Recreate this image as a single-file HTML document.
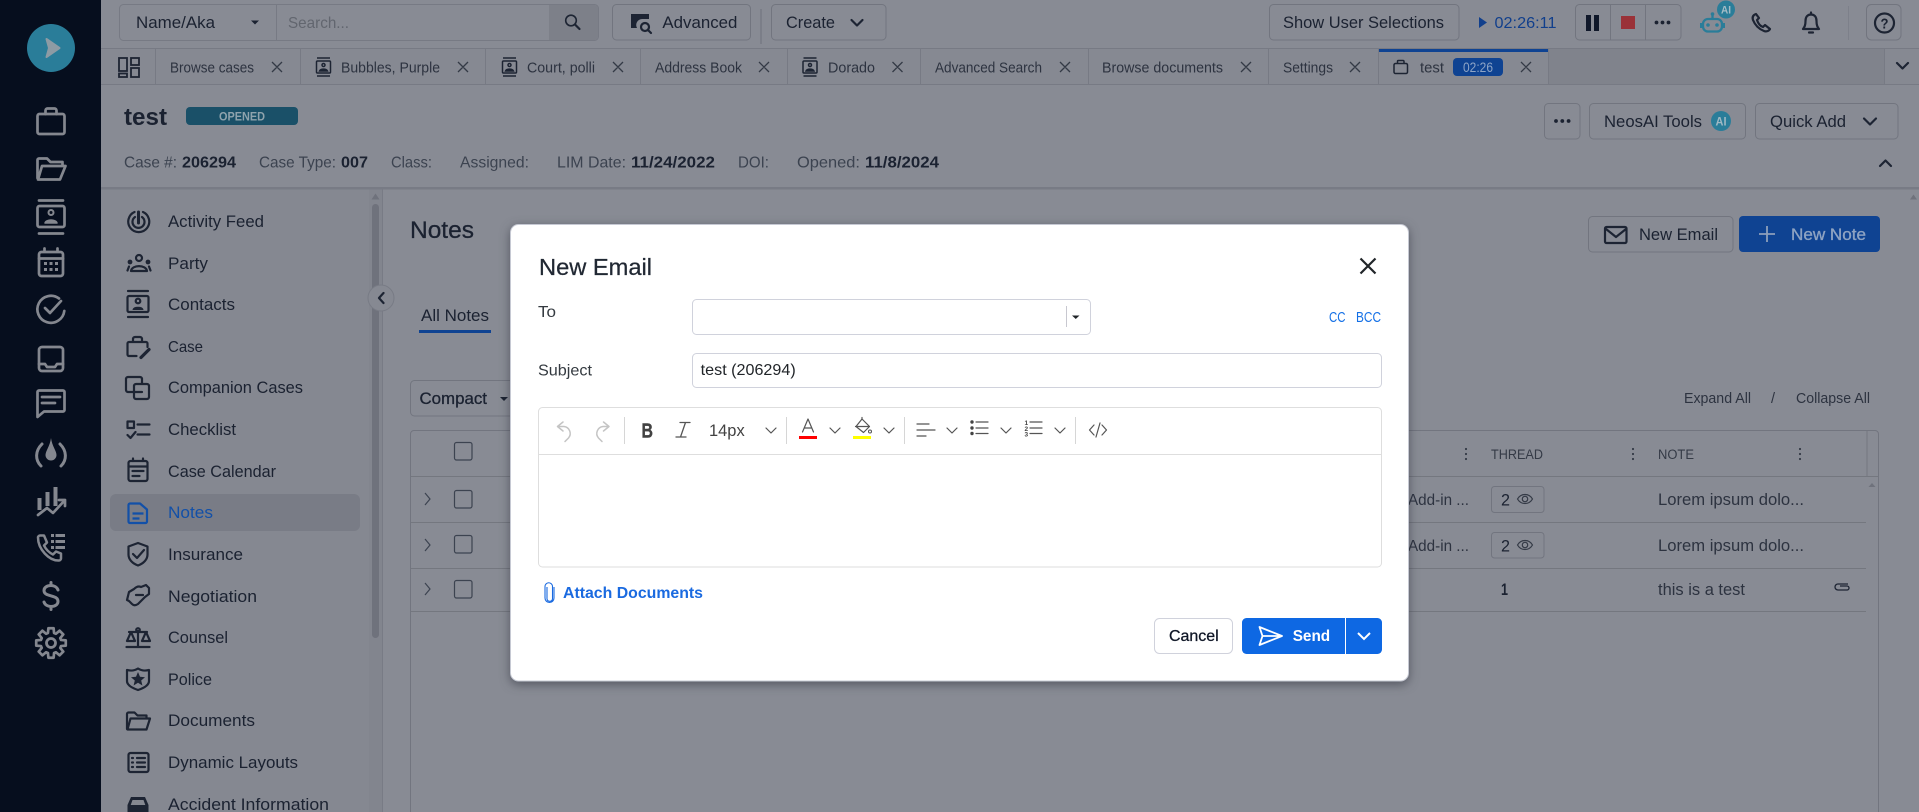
<!DOCTYPE html>
<html lang="en"><head><meta charset="utf-8"><title>Notes - New Email</title>
<style>
html,body{margin:0;padding:0;width:1919px;height:812px;overflow:hidden;background:#888b94}
svg{display:block}
text{font-family:"Liberation Sans","DejaVu Sans",sans-serif;fill:#1b2231}
.i{fill:none;stroke:#1d2433;stroke-width:2.2;stroke-linecap:round;stroke-linejoin:round}
.s{fill:none;stroke:#84878f;stroke-width:2.7;stroke-linecap:round;stroke-linejoin:round}
.b{fill:none;stroke:#72757f;stroke-width:1}
.m{font-size:17px}
.tb{font-size:14.5px;fill:#2d3340}
.h{font-size:16px;fill:#3c4350}
.hb{font-size:16px;font-weight:bold}
.u{font-size:16.500px}
.x{fill:none;stroke:#343a46;stroke-width:1.3}
.g{fill:none;stroke:#555;stroke-width:1.2;stroke-linecap:round;stroke-linejoin:round}
.md{stroke:#1b2231;stroke-width:.3px}
</style></head><body>
<svg xmlns="http://www.w3.org/2000/svg" width="1919" height="812" viewBox="0 0 1919 812">
<rect width="1919" height="812" fill="#888b94"/>

<!-- left rail -->
<rect width="101" height="812" fill="#060e1e"/>
<circle cx="51" cy="48" r="24" fill="#2a7d99"/>
<path d="M46.5 39 L59.5 48 L46.5 57 L49 48 Z" fill="#8d9ba4" stroke="#8d9ba4" stroke-width="2" stroke-linejoin="round"/>
<g class="s">
<rect x="37.5" y="114" width="27" height="20" rx="2"/><path d="M45.5 114v-3.5a2 2 0 0 1 2-2h7a2 2 0 0 1 2 2v3.5"/>
<path d="M37.5 178V160a1.5 1.5 0 0 1 1.5-1.5h8l3.5 3.5h12v3M38 179.500L42 166h23.500L60 179.500Z"/>
<path d="M39 200.500h24M39 233.500h24"/><rect x="37.500" y="206" width="27" height="21" rx="2"/><circle cx="51" cy="212.500" r="2.500" stroke-width="2"/><path d="M45 223c1-4 11-4 12 0z" fill="#84878f" stroke-width="1.500"/>
<rect x="39" y="252" width="24" height="24" rx="2.500"/><path d="M39 258.500h24M44.500 248.500v3M57.500 248.500v3"/>
<path d="M59 298.500A13.500 13.500 0 1 0 64.300 311M45 308l5 5 11-12"/>
<rect x="39" y="347" width="24" height="24" rx="3"/><path d="M39 364h6l2 3h8l2-3h6"/>
<path d="M39 390.500h24a1.500 1.500 0 0 1 1.500 1.500v18a1.500 1.500 0 0 1-1.500 1.500H44l-6.500 5.500V392a1.500 1.500 0 0 1 1.500-1.500zM42 397h18M42 403h13"/>
<path d="M42 444C35 451 35 460 41 466M60 444C67 451 67 460 61 466" stroke-width="3"/>
<path d="M38 515L47 508L53 513L65 500M59 500h6v6"/>
<path d="M40 535.500h4l3 7-3 3c2 4 5 7 9 9l3-3 5 2v5c0 1-1 2-2 2C49 561 38 549 38 537.500c0-1 1-2 2-2z" stroke-width="2.500"/>
<path d="M58 590c-1-3-4-4.500-7-4.500-4 0-7 2-7 5 0 7 14 3.500 14 11 0 3-3 5-7 5-3 0-6-1.500-7-4.500M51 582.500v3M51 606.500v3" stroke-width="3"/>
<path transform="translate(51 643)" d="M10.04-3.07L14.77-2.6V2.6L10.04 3.07L9.27 4.93L12.29 8.6L8.6 12.29L4.93 9.27L3.07 10.04L2.6 14.77H-2.6L-3.07 10.04L-4.93 9.27L-8.6 12.29L-12.29 8.6L-9.27 4.93L-10.04 3.07L-14.77 2.6V-2.6L-10.04-3.07L-9.27-4.93L-12.29-8.6L-8.6-12.29L-4.93-9.27L-3.07-10.04L-2.6-14.77H2.6L3.07-10.04L4.93-9.27L8.6-12.29L12.29-8.6L9.27-4.93Z"/>
<circle cx="51" cy="643" r="4.500" stroke-width="2.800"/>
</g>
<g fill="#84878f">
<rect x="44" y="262" width="3" height="3"/><rect x="49.500" y="262" width="3" height="3"/><rect x="55" y="262" width="3" height="3"/>
<rect x="44" y="268" width="3" height="3"/><rect x="49.500" y="268" width="3" height="3"/><rect x="55" y="268" width="3" height="3"/>
<path d="M51 438C52 446 56.500 451 56.500 455a5.500 5.500 0 0 1-11 0C45.500 451 50 446 51 438z"/>
<rect x="37.500" y="498" width="4" height="12"/><rect x="45.500" y="492" width="4" height="14"/><rect x="53.500" y="487" width="4" height="19"/>
<rect x="51" y="534" width="3" height="3"/><rect x="55.500" y="534" width="9.500" height="3"/>
<rect x="51" y="540" width="3" height="3"/><rect x="55.500" y="540" width="9.500" height="3"/>
<rect x="51" y="546" width="3" height="3"/><rect x="55.500" y="546" width="9.500" height="3"/>
</g>

<!-- top bar -->
<rect x="119.500" y="4.500" width="479" height="36" rx="4" fill="#888b94" stroke="#777a84"/>
<path d="M549 5h45.500a3.500 3.500 0 0 1 3.500 3.500v28a3.500 3.500 0 0 1-3.500 3.500H549z" fill="#7d8089"/>
<path d="M276.500 5v35" stroke="#777a84"/>
<text x="136" y="28" font-size="17" textLength="79" lengthAdjust="spacingAndGlyphs">Name/Aka</text>
<path d="M251 20.500h8l-4 4z" fill="#1b2231"/>
<text x="288" y="28" font-size="16" textLength="61" lengthAdjust="spacingAndGlyphs" style="fill:#62666f">Search...</text>
<circle cx="571" cy="20.500" r="5.300" fill="none" stroke="#1d2433" stroke-width="1.600"/><path d="M575 24.500l4.500 4.500" class="i"/>
<rect x="612.500" y="4.500" width="138" height="35.500" rx="4" class="b"/>
<path d="M631 14h18v5h-7a6 6 0 0 0-5 9h-6z" fill="#1d2433"/><circle cx="645" cy="27" r="4" class="i"/><path d="M648 30l3 3" class="i"/>
<text x="662.400" y="28" font-size="17" textLength="75" lengthAdjust="spacingAndGlyphs">Advanced</text>
<path d="M761 9v35" stroke="#777a84" stroke-width="1.500"/>
<rect x="771.500" y="4.500" width="114.500" height="35.500" rx="4" class="b"/>
<text x="786" y="28" font-size="16.500" textLength="49" lengthAdjust="spacingAndGlyphs">Create</text>
<path d="M851.500 20l5.500 5.500 5.500-5.500" class="i"/>
<rect x="1269.500" y="4.500" width="189.500" height="35.500" rx="4" class="b"/>
<text x="1283" y="28" class="u" textLength="161" lengthAdjust="spacingAndGlyphs">Show User Selections</text>
<path d="M1479 17l8 5.500-8 5.500z" fill="#113f8c"/>
<text x="1494.500" y="28" font-size="16" textLength="62" lengthAdjust="spacingAndGlyphs" style="fill:#113f8c">02:26:11</text>
<rect x="1575.500" y="4.500" width="105.500" height="35.500" rx="4" class="b"/><path d="M1610.500 5v35M1645.500 5v35" stroke="#72757f"/>
<rect x="1586" y="15" width="5" height="16" fill="#10182a"/><rect x="1594" y="15" width="5" height="16" fill="#10182a"/>
<rect x="1621" y="16" width="14" height="13" fill="#9a3238"/>
<circle cx="1656.500" cy="22.500" r="1.900" fill="#1b2231"/><circle cx="1662.500" cy="22.500" r="1.900" fill="#1b2231"/><circle cx="1668.500" cy="22.500" r="1.900" fill="#1b2231"/>
<g fill="none" stroke="#2a7d99" stroke-width="2.300">
<rect x="1703" y="19" width="19" height="12.500" rx="5"/><path d="M1712.500 15v4"/></g>
<circle cx="1712.500" cy="14" r="1.800" fill="#2a7d99"/><circle cx="1708" cy="25" r="1.800" fill="#2a7d99"/><circle cx="1717" cy="25" r="1.800" fill="#2a7d99"/>
<rect x="1700" y="23" width="2" height="5" fill="#2a7d99"/><rect x="1723" y="23" width="2" height="5" fill="#2a7d99"/>
<circle cx="1726" cy="9.500" r="9" fill="#2a7d99"/>
<text x="1721" y="13.500" font-size="11" font-weight="bold" textLength="10" lengthAdjust="spacingAndGlyphs" style="fill:#a5bcc6">AI</text>
<path d="M1756 14c-3 1-4 3-3 6 2 5 6 9 11 11 2 1 5 0 6-2l-5-4-2 2c-3-1-5-4-6-7l2-2z" class="i"/>
<path d="M1811 12.500v2M1803 29c1.500-2 2.500-3.500 2.500-8 0-4 2-6.500 5.500-6.500s5.500 2.500 5.500 6.500c0 4.500 1 6 2.500 8zM1809 32.500h4" class="i"/>
<path d="M1848.500 6v34" stroke="#7d808a"/>
<rect x="1866.500" y="4.500" width="34.500" height="35.500" rx="5" class="b"/>
<circle cx="1884.500" cy="23" r="9.500" class="i"/>
<text x="1880.500" y="28.500" font-size="15" font-weight="bold" textLength="8" lengthAdjust="spacingAndGlyphs">?</text>

<!-- tab bar -->
<rect x="101" y="48" width="1818" height="36" fill="#868992"/>
<rect x="1548" y="49" width="336" height="35" fill="#80838c"/>
<path d="M101 48.500h1818M101 84.500h1818" stroke="#777a84"/>
<path d="M155.500 49v35M300.500 49v35M485.500 49v35M640.500 49v35M787.500 49v35M920.500 49v35M1088.500 49v35M1268.500 49v35M1378.500 49v35M1548.500 49v35M1884.500 49v35" stroke="#777a84"/>
<g fill="none" stroke="#1d2433" stroke-width="1.800">
<rect x="119" y="58" width="8" height="13"/><rect x="131" y="58" width="8" height="7"/><rect x="119" y="73.500" width="8" height="3.500"/><rect x="131" y="68" width="8" height="9"/>
</g>
<rect x="1379" y="49" width="169" height="3" fill="#0f4392"/>
<text x="170" y="72.500" class="tb" textLength="84" lengthAdjust="spacingAndGlyphs">Browse cases</text>
<text x="341" y="72.500" class="tb" textLength="99" lengthAdjust="spacingAndGlyphs">Bubbles, Purple</text>
<text x="527" y="72.500" class="tb" textLength="68" lengthAdjust="spacingAndGlyphs">Court, polli</text>
<text x="655" y="72.500" class="tb" textLength="87" lengthAdjust="spacingAndGlyphs">Address Book</text>
<text x="828" y="72.500" class="tb" textLength="47" lengthAdjust="spacingAndGlyphs">Dorado</text>
<text x="935" y="72.500" class="tb" textLength="107" lengthAdjust="spacingAndGlyphs">Advanced Search</text>
<text x="1102" y="72.500" class="tb" textLength="121" lengthAdjust="spacingAndGlyphs">Browse documents</text>
<text x="1283" y="72.500" class="tb" textLength="50" lengthAdjust="spacingAndGlyphs">Settings</text>
<text x="1420" y="72.500" class="tb" textLength="24" lengthAdjust="spacingAndGlyphs">test</text>
<g class="x">
<path d="M272 62l10 10M282 62l-10 10M458 62l10 10M468 62l-10 10M613 62l10 10M623 62l-10 10M759 62l10 10M769 62l-10 10M892.500 62l10 10M902.500 62l-10 10M1060 62l10 10M1070 62l-10 10M1241 62l10 10M1251 62l-10 10M1350 62l10 10M1360 62l-10 10M1521 62l10 10M1531 62l-10 10"/>
</g>
<g fill="none" stroke="#1d2433" stroke-width="1.500">
<path d="M317 58h13M317 76h13"/><rect x="316.500" y="61" width="14" height="12" rx="1"/><circle cx="323.500" cy="65" r="1.500"/><path d="M319.500 71c1-2.500 7-2.500 8 0z" fill="#1d2433"/>
<path d="M503 58h13M503 76h13"/><rect x="502.500" y="61" width="14" height="12" rx="1"/><circle cx="509.500" cy="65" r="1.500"/><path d="M505.500 71c1-2.500 7-2.500 8 0z" fill="#1d2433"/>
<path d="M803.500 58h13M803.500 76h13"/><rect x="803" y="61" width="14" height="12" rx="1"/><circle cx="810" cy="65" r="1.500"/><path d="M806 71c1-2.500 7-2.500 8 0z" fill="#1d2433"/>
<rect x="1394" y="63.500" width="13.500" height="10" rx="1.500"/><path d="M1397.500 63.500v-2a1 1 0 0 1 1-1h4.500a1 1 0 0 1 1 1v2"/>
</g>
<rect x="1453" y="58" width="50" height="18" rx="4" fill="#0f4392"/>
<text x="1463" y="72" font-size="14" textLength="30" lengthAdjust="spacingAndGlyphs" style="fill:#8da4c6">02:26</text>
<path d="M1897 63l5.500 5.500 5.500-5.500" class="i"/>

<!-- case header -->
<text x="124" y="125" font-size="24" font-weight="bold" textLength="43" lengthAdjust="spacingAndGlyphs">test</text>
<rect x="186" y="107" width="112" height="18" rx="4" fill="#1a5068"/>
<text x="219" y="120.500" font-size="12" font-weight="bold" textLength="46" lengthAdjust="spacingAndGlyphs" style="fill:#8fa3ad">OPENED</text>
<text x="124" y="167.500" class="h" textLength="53" lengthAdjust="spacingAndGlyphs">Case #:</text>
<text x="182" y="167.500" class="hb" textLength="54" lengthAdjust="spacingAndGlyphs">206294</text>
<text x="259" y="167.500" class="h" textLength="77" lengthAdjust="spacingAndGlyphs">Case Type:</text>
<text x="341" y="167.500" class="hb" textLength="27" lengthAdjust="spacingAndGlyphs">007</text>
<text x="391" y="167.500" class="h" textLength="41" lengthAdjust="spacingAndGlyphs">Class:</text>
<text x="460" y="167.500" class="h" textLength="69" lengthAdjust="spacingAndGlyphs">Assigned:</text>
<text x="557" y="167.500" class="h" textLength="69" lengthAdjust="spacingAndGlyphs">LIM Date:</text>
<text x="631" y="167.500" class="hb" textLength="84" lengthAdjust="spacingAndGlyphs">11/24/2022</text>
<text x="738" y="167.500" class="h" textLength="31" lengthAdjust="spacingAndGlyphs">DOI:</text>
<text x="797" y="167.500" class="h" textLength="63" lengthAdjust="spacingAndGlyphs">Opened:</text>
<text x="865" y="167.500" class="hb" textLength="74" lengthAdjust="spacingAndGlyphs">11/8/2024</text>
<rect x="1544.500" y="103.500" width="35.500" height="35.500" rx="4" class="b"/>
<circle cx="1556" cy="121" r="1.900" fill="#1b2231"/><circle cx="1562.300" cy="121" r="1.900" fill="#1b2231"/><circle cx="1568.600" cy="121" r="1.900" fill="#1b2231"/>
<rect x="1589.500" y="103.500" width="156" height="35.500" rx="4" class="b"/>
<text x="1604" y="127" class="u" textLength="98" lengthAdjust="spacingAndGlyphs">NeosAI Tools</text>
<circle cx="1721" cy="121" r="10" fill="#2a7d99"/>
<text x="1715.500" y="125.500" font-size="12" font-weight="bold" textLength="11" lengthAdjust="spacingAndGlyphs" style="fill:#a0b9c4">AI</text>
<rect x="1755.500" y="103.500" width="142.500" height="35.500" rx="4" class="b"/>
<text x="1770" y="127" class="u" textLength="76" lengthAdjust="spacingAndGlyphs">Quick Add</text>
<path d="M1864 118.500l6 6 6-6" class="i"/>
<path d="M1880 166l5.500-5.500 5.500 5.500" class="i"/>
<rect x="101" y="187" width="1818" height="2.500" fill="#787b85"/>

<!-- menu -->
<rect x="101" y="189.500" width="268" height="622.500" fill="#858891"/>
<rect x="369" y="189.500" width="13" height="622.500" fill="#82858e"/>
<path d="M382.500 189v623" stroke="#787b85"/>
<rect x="372" y="204" width="7" height="434" rx="3.500" fill="#6f727c"/>
<path d="M371.500 199.500l4-6 4 6z" fill="#6f727c"/>
<rect x="110" y="494" width="250" height="37" rx="6" fill="#797c86"/>
<text x="168" y="227" class="m" textLength="96" lengthAdjust="spacingAndGlyphs">Activity Feed</text>
<text x="168" y="269" class="m" textLength="40" lengthAdjust="spacingAndGlyphs">Party</text>
<text x="168" y="310" class="m" textLength="67" lengthAdjust="spacingAndGlyphs">Contacts</text>
<text x="168" y="352" font-size="16" textLength="35" lengthAdjust="spacingAndGlyphs">Case</text>
<text x="168" y="393" class="m" textLength="135" lengthAdjust="spacingAndGlyphs">Companion Cases</text>
<text x="168" y="435" class="m" textLength="68" lengthAdjust="spacingAndGlyphs">Checklist</text>
<text x="168" y="477" class="m" textLength="108" lengthAdjust="spacingAndGlyphs">Case Calendar</text>
<text x="168" y="518" class="m" textLength="45" lengthAdjust="spacingAndGlyphs" style="fill:#1250a8">Notes</text>
<text x="168" y="560" class="m" textLength="75" lengthAdjust="spacingAndGlyphs">Insurance</text>
<text x="168" y="602" class="m" textLength="89" lengthAdjust="spacingAndGlyphs">Negotiation</text>
<text x="168" y="643" class="m" textLength="60" lengthAdjust="spacingAndGlyphs">Counsel</text>
<text x="168" y="685" class="m" textLength="44" lengthAdjust="spacingAndGlyphs">Police</text>
<text x="168" y="726" class="m" textLength="87" lengthAdjust="spacingAndGlyphs">Documents</text>
<text x="168" y="768" class="m" textLength="130" lengthAdjust="spacingAndGlyphs">Dynamic Layouts</text>
<text x="168" y="810" class="m" textLength="161" lengthAdjust="spacingAndGlyphs">Accident Information</text>
<g class="i">
<path d="M134.500 212A10.500 10.500 0 1 0 143 212M135 217A6 6 0 1 0 142 217"/><path d="M138.500 212v11" stroke-width="3"/>
<circle cx="139" cy="258" r="3"/><path d="M131 271c1-6.500 15-6.500 16 0zM129 266.500l-1.500 4M149 266.500l1.500 4"/><circle cx="130" cy="262" r="1.300"/><circle cx="148" cy="262" r="1.300"/>
<path d="M128 291h20M128 317h20"/><rect x="127.500" y="296" width="21" height="16" rx="1.500"/><circle cx="138" cy="301" r="2.300"/><path d="M133 309.500c1-3 9-3 10 0z" fill="#1d2433" stroke-width="1"/>
<path d="M147.500 347v-3.500a1.500 1.500 0 0 0-1.500-1.500H129a1.500 1.500 0 0 0-1.500 1.500v11a1.500 1.500 0 0 0 1.500 1.500h7.500M133 342v-3a2 2 0 0 1 2-2h5a2 2 0 0 1 2 2v3"/><path d="M141 357.500l8-8" stroke-width="3.200"/>
<path d="M142 384v-5a2 2 0 0 0-2-2H128a2 2 0 0 0-2 2v11a2 2 0 0 0 2 2h6M134 386a2 2 0 0 1 2-2h11a2 2 0 0 1 2 2v11a2 2 0 0 1-2 2h-11a2 2 0 0 1-2-2zM142 392h-8"/>
<rect x="127.500" y="421.500" width="6.500" height="6.500"/><path d="M137.500 424.500h12M127.500 435l3 3 5-6M137.500 434.500h12"/>
<rect x="128.500" y="461" width="19" height="20" rx="2"/><path d="M128.500 466.500h19M133 458.500v2.500M143 458.500v2.500M132.500 471h11M132.500 476h7"/>
<path d="M138 543l9.500 3.500v8c0 5-4 9-9.500 11-5.500-2-9.500-6-9.500-11v-8zM133 554l4 4 7-8"/>
<path d="M134 589c3-3 5-3 7-2l5-2 3 3v6l-4 3-7 7c-3 2-5 1-6 0l-3-3-2-1 2-8zM136 595h7"/>
<path d="M138 631v16M126.500 647h23M129 632h18M131 632l-4 9h8zM146 632l-4 9h8z"/><circle cx="138" cy="630" r="1.800"/>
<path d="M138 668.500c3 2 7 2.500 11 1.500v11c0 4-5 7-11 9-6-2-11-5-11-9v-11c4 1 8 .5 11-1.500z"/>
<path d="M127 729V714a1.500 1.500 0 0 1 1.500-1.500h6l3 3h9v2.500M127.500 729.500l3-11h19.500l-3.500 11z"/>
<rect x="128.500" y="753" width="20" height="19" rx="2"/><path d="M137 758h8M137 762.500h8M137 767h8"/>
</g>
<path d="M132 758h1M132 762.500h1M132 767h1" class="i" stroke-width="2.500"/>
<path d="M138 672l2 4.800 5 .4-3.800 3.300 1.200 5-4.400-2.700-4.400 2.700 1.200-5-3.800-3.300 5-.4z" fill="#1d2433"/>
<path d="M131 797h14l3.500 8v7h-21v-7zM132.500 800l-1.800 5h14.600l-1.800-5z" fill="#1d2433" fill-rule="evenodd"/>
<g fill="none" stroke="#1250a8" stroke-width="2.200" stroke-linejoin="round"><path d="M130 503.500h10l7 6v12a1.500 1.500 0 0 1-1.500 1.500H130a1.500 1.500 0 0 1-1.500-1.500v-16.500a1.500 1.500 0 0 1 1.500-1.500zM132.500 513.500h11M132.500 518.500h7"/></g>

<circle cx="381" cy="298" r="13" fill="#868992" stroke="#787b85"/>
<path d="M383.500 293l-4.500 5 4.500 5" class="i"/>

<!-- notes content -->
<text x="410" y="238" font-size="24.500" class="md" textLength="64" lengthAdjust="spacingAndGlyphs">Notes</text>
<text x="421" y="321" font-size="17" textLength="68" lengthAdjust="spacingAndGlyphs">All Notes</text>
<rect x="419" y="330" width="72" height="3" fill="#0f4392"/>
<rect x="410.500" y="380.500" width="120" height="35.500" rx="4" class="b"/>
<text x="419.500" y="404" font-size="17" class="md" textLength="67.500" lengthAdjust="spacingAndGlyphs">Compact</text>
<path d="M500 397h8l-4 4z" fill="#1b2231"/>
<rect x="1588.500" y="216.500" width="144.500" height="35.500" rx="4" class="b"/>
<rect x="1605" y="227" width="21.500" height="16" rx="1.500" fill="none" stroke="#1d2433" stroke-width="2.200"/><path d="M1606 229l10 8 10-8" class="i"/>
<text x="1639" y="240" class="u" textLength="79" lengthAdjust="spacingAndGlyphs">New Email</text>
<rect x="1739" y="216" width="141" height="36" rx="4" fill="#0f4392"/>
<path d="M1767 226v16M1759 234h16" stroke="#8d9fbb" stroke-width="1.800"/>
<text x="1791" y="240" font-size="17" textLength="75" lengthAdjust="spacingAndGlyphs" style="fill:#8ea3c2;stroke:#8ea3c2;stroke-width:.35px">New Note</text>
<text x="1684" y="403" font-size="14.500" textLength="67" lengthAdjust="spacingAndGlyphs" style="fill:#2d3340">Expand All</text>
<text x="1771" y="403" font-size="14.500" style="fill:#2d3340">/</text>
<text x="1796" y="403" font-size="14.500" textLength="74" lengthAdjust="spacingAndGlyphs" style="fill:#2d3340">Collapse All</text>
<path d="M410.500 812V434a3.500 3.500 0 0 1 3.500-3.500h1461a3.500 3.500 0 0 1 3.500 3.500V812" class="b"/>
<path d="M411 476.500h1467M411 522.500h1455M411 568.500h1455M411 611.500h1455M1867 431v45" stroke="#74777f"/>
<rect x="454.500" y="442.500" width="17.500" height="17.500" rx="2" fill="none" stroke="#3c4350" stroke-width="1.200"/>
<rect x="454.500" y="490.500" width="17.500" height="17.500" rx="2" fill="none" stroke="#3c4350" stroke-width="1.200"/>
<rect x="454.500" y="535.500" width="17.500" height="17.500" rx="2" fill="none" stroke="#3c4350" stroke-width="1.200"/>
<rect x="454.500" y="580.500" width="17.500" height="17.500" rx="2" fill="none" stroke="#3c4350" stroke-width="1.200"/>
<path d="M425 493l5 6-5 6M425 539l5 6-5 6M425 583l5 6-5 6" fill="none" stroke="#3c4350" stroke-width="1.200"/>
<text x="1491" y="459" font-size="13.500" textLength="52" lengthAdjust="spacingAndGlyphs" style="fill:#343a46">THREAD</text>
<text x="1658" y="459" font-size="13.500" textLength="36" lengthAdjust="spacingAndGlyphs" style="fill:#343a46">NOTE</text>
<g fill="#343a46"><circle cx="1466" cy="449" r="1.100"/><circle cx="1466" cy="454" r="1.100"/><circle cx="1466" cy="459" r="1.100"/><circle cx="1633" cy="449" r="1.100"/><circle cx="1633" cy="454" r="1.100"/><circle cx="1633" cy="459" r="1.100"/><circle cx="1800" cy="449" r="1.100"/><circle cx="1800" cy="454" r="1.100"/><circle cx="1800" cy="459" r="1.100"/></g>
<text x="1408" y="505" font-size="16" textLength="61" lengthAdjust="spacingAndGlyphs" style="fill:#2d3340">Add-in ...</text>
<text x="1408" y="551" font-size="16" textLength="61" lengthAdjust="spacingAndGlyphs" style="fill:#2d3340">Add-in ...</text>
<rect x="1491.500" y="486.500" width="52.500" height="26" rx="3" class="b"/><rect x="1491.500" y="532.500" width="52.500" height="25.500" rx="3" class="b"/>
<text x="1501" y="505.500" font-size="17" textLength="9" lengthAdjust="spacingAndGlyphs">2</text>
<text x="1501" y="551.500" font-size="17" textLength="9" lengthAdjust="spacingAndGlyphs">2</text>
<path d="M1517.500 499c3.500-6 11.500-6 15 0-3.500 6-11.500 6-15 0zM1517.500 545c3.500-6 11.500-6 15 0-3.500 6-11.500 6-15 0z" fill="none" stroke="#343a46" stroke-width="1.200"/>
<circle cx="1525" cy="499" r="2.700" fill="none" stroke="#343a46" stroke-width="1.200"/><circle cx="1525" cy="545" r="2.700" fill="none" stroke="#343a46" stroke-width="1.200"/>
<text x="1658" y="505" font-size="16.300" textLength="146" lengthAdjust="spacingAndGlyphs" style="fill:#2d3340">Lorem ipsum dolo...</text>
<text x="1658" y="551" font-size="16.300" textLength="146" lengthAdjust="spacingAndGlyphs" style="fill:#2d3340">Lorem ipsum dolo...</text>
<text x="1501" y="595" font-size="17" font-weight="bold" textLength="7" lengthAdjust="spacingAndGlyphs">1</text>
<text x="1658" y="595" font-size="16.500" textLength="87" lengthAdjust="spacingAndGlyphs" style="fill:#2d3340">this is a test</text>
<path d="M1848 584h-10a3 3 0 0 0 0 6h9a2 2 0 0 0 0-4h-7" fill="none" stroke="#1d2433" stroke-width="1.300"/>
<path d="M1868.500 487l3.500-4 3.500 4z" fill="#6f727c"/>
<path d="M1910 199.500l3.500-5 3.500 5z" fill="#6f727c"/>

<!-- modal -->
<rect x="510.500" y="224.500" width="898" height="456.500" rx="8" fill="#fff" stroke="#c6c9d3" style="filter:drop-shadow(0 3px 5px rgba(40,44,55,.55))"/>
<text x="539" y="275" font-size="23.500" textLength="113" lengthAdjust="spacingAndGlyphs" style="fill:#212833;stroke:#212833;stroke-width:.25px">New Email</text>
<path d="M1360.500 258.500l15 15M1375.500 258.500l-15 15" fill="none" stroke="#212529" stroke-width="2.200"/>
<text x="538" y="317" font-size="16" textLength="18" lengthAdjust="spacingAndGlyphs" style="fill:#343a40">To</text>
<text x="538" y="375.500" font-size="16" textLength="54" lengthAdjust="spacingAndGlyphs" style="fill:#343a40">Subject</text>
<rect x="692.500" y="299.500" width="398" height="35" rx="4" fill="#fff" stroke="#d0d2dc"/>
<path d="M1066.500 306v21" stroke="#c8c8d0"/><path d="M1072 315.500h7.500l-3.750 3.500z" fill="#212529"/>
<text x="1329" y="322" font-size="14.500" textLength="16.500" lengthAdjust="spacingAndGlyphs" style="fill:#1470e6">CC</text>
<text x="1356" y="322" font-size="14.500" textLength="25" lengthAdjust="spacingAndGlyphs" style="fill:#1470e6">BCC</text>
<rect x="692.500" y="353.500" width="689" height="34" rx="4" fill="#fff" stroke="#d0d2dc"/>
<text x="700.700" y="375" font-size="16" textLength="95" lengthAdjust="spacingAndGlyphs" style="fill:#212529">test (206294)</text>
<rect x="538.500" y="407.500" width="843" height="159.500" rx="4" fill="#fff" stroke="#dedede"/>
<path d="M539 454.500h842" stroke="#dedede"/>
<path d="M624.500 417v27M786.500 417v27M904.500 417v27M1075.500 417v27" stroke="#d6d6d6"/>
<g fill="none" stroke="#c4c4c4" stroke-width="1.500" stroke-linecap="round" stroke-linejoin="round">
<path d="M563 422l-5.500 4.500 5.500 4.500M558 426.500h6a7 7 0 0 1 4.500 11.500l-3.500 3.500"/>
<path d="M603.500 422l5.500 4.500-5.500 4.500M609 426.500h-6a7 7 0 0 0-4.500 11.500l3.500 3.500"/>
</g>
<text x="641.500" y="437.500" font-size="20.500" font-weight="bold" textLength="11.500" lengthAdjust="spacingAndGlyphs" style="fill:#424242;stroke:#424242;stroke-width:.4px">B</text>
<g class="g">
<path d="M680 422.500h10M676 437h10M685.500 422.500L680.500 437" stroke-width="1.300"/>
<path d="M766 428l5 5 5-5M830 428l5 5 5-5M884 428l5 5 5-5M947 428l5 5 5-5M1001 428l5 5 5-5M1055 428l5 5 5-5"/>
<path d="M917 424h12M917 430h18M917 436h9"/>
<path d="M976 422h12M976 428h12M976 433.500h12M1030 422h12M1030 428h12M1030 433.500h12"/>
<path d="M1094 425l-4.500 5 4.500 5M1102 425l4.500 5-4.500 5M1100 423l-4 14"/>
<path d="M862 419l7.500 7.500-6 6-7.500-6zM855.500 426.500h14M862 419v-1.500"/>
<path d="M802.500 432l5.500-13 5.500 13M804.500 428h7"/>
</g>
<circle cx="870" cy="431.500" r="1.500" fill="none" stroke="#555"/>
<rect x="799" y="436" width="18" height="3" fill="#f00"/>
<rect x="853" y="436" width="18" height="3" fill="#ff0"/>
<g fill="#444"><circle cx="972" cy="422" r="1.700"/><circle cx="972" cy="428" r="1.700"/><circle cx="972" cy="433.500" r="1.700"/></g>
<text x="1024.500" y="425" font-size="6.500" font-weight="bold" style="fill:#444">1</text>
<text x="1024.500" y="430.800" font-size="6.500" font-weight="bold" style="fill:#444">2</text>
<text x="1024.500" y="436.500" font-size="6.500" font-weight="bold" style="fill:#444">3</text>
<text x="709" y="436" font-size="16.500" textLength="35.700" lengthAdjust="spacingAndGlyphs" style="fill:#424242">14px</text>
<path d="M547 587v12a2.800 2.800 0 0 0 5.500 0v-12.500a3.500 3.500 0 0 0-7.500 0V598a4.500 4.500 0 0 0 9 0v-11" fill="none" stroke="#1a6ae0" stroke-width="1.100"/>
<text x="563" y="598" font-size="16" font-weight="bold" textLength="140" lengthAdjust="spacingAndGlyphs" style="fill:#1a6ae0">Attach Documents</text>
<rect x="1154.500" y="618.500" width="78" height="35" rx="5" fill="#fff" stroke="#d0d2dc"/>
<text x="1169" y="641" font-size="16" class="md" textLength="49.700" lengthAdjust="spacingAndGlyphs" style="fill:#0d1424">Cancel</text>
<rect x="1242" y="618" width="140" height="36" rx="4.500" fill="#0e68e3"/>
<path d="M1345.500 618v36" stroke="#fff"/>
<path d="M1259.500 627L1282 636L1259.500 645L1262.500 636ZM1262.500 636H1282" fill="none" stroke="#fff" stroke-width="1.800" stroke-linejoin="round"/>
<text x="1292.700" y="641" font-size="15.500" font-weight="bold" textLength="37.500" lengthAdjust="spacingAndGlyphs" style="fill:#fff">Send</text>
<path d="M1358 633l6 6 6-6" fill="none" stroke="#fff" stroke-width="2"/>
</svg>
</body></html>
